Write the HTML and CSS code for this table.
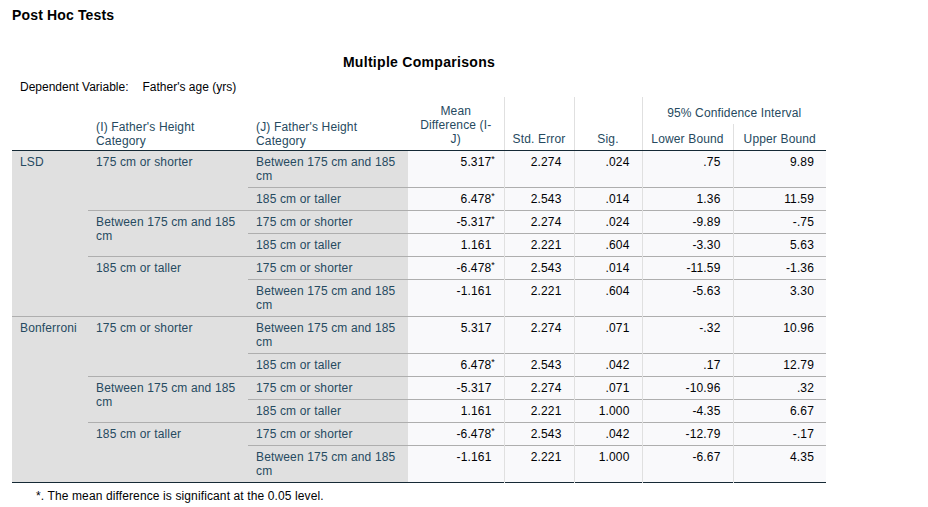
FILE: index.html
```html
<!DOCTYPE html>
<html lang="en">
<head>
<meta charset="utf-8">
<title>Post Hoc Tests</title>
<link rel="stylesheet" href="styles.css">
</head>
<body>
<h1 class="title">Post Hoc Tests</h1>
<section class="pivot">
  <h2 class="caption">Multiple Comparisons</h2>
  <div class="depvar"><span>Dependent Variable:</span><span>Father's age (yrs)</span></div>
  <table class="mc">
    <colgroup>
      <col class="c-method"><col class="c-i"><col class="c-j"><col class="c-md"><col class="c-se"><col class="c-sig"><col class="c-lb"><col class="c-ub">
    </colgroup>
    <thead>
      <tr>
        <th class="rh hb" rowspan="2"></th>
        <th class="rh hb" rowspan="2">(I) Father's Height Category</th>
        <th class="rh hb" rowspan="2">(J) Father's Height Category</th>
        <th class="ch hb md" rowspan="2">Mean Difference (I-J)</th>
        <th class="ch hb vl" rowspan="2">Std. Error</th>
        <th class="ch hb vl" rowspan="2">Sig.</th>
        <th class="ch vl ci" colspan="2">95% Confidence Interval</th>
      </tr>
      <tr>
        <th class="ch hb vl sub">Lower Bound</th>
        <th class="ch hb vl sub">Upper Bound</th>
      </tr>
    </thead>
    <tbody>
      <tr>
        <td class="m" rowspan="6">LSD</td>
        <td class="i" rowspan="2">175 cm or shorter</td>
        <td class="j">Between 175 cm and 185 cm</td>
        <td class="n">5.317<sup class="star">*</sup></td><td class="n vl">2.274</td><td class="n vl">.024</td><td class="n vl">.75</td><td class="n vl">9.89</td>
      </tr>
      <tr>
        <td class="j">185 cm or taller</td>
        <td class="n">6.478<sup class="star">*</sup></td><td class="n vl">2.543</td><td class="n vl">.014</td><td class="n vl">1.36</td><td class="n vl">11.59</td>
      </tr>
      <tr>
        <td class="i" rowspan="2">Between 175 cm and 185 cm</td>
        <td class="j">175 cm or shorter</td>
        <td class="n">-5.317<sup class="star">*</sup></td><td class="n vl">2.274</td><td class="n vl">.024</td><td class="n vl">-9.89</td><td class="n vl">-.75</td>
      </tr>
      <tr>
        <td class="j">185 cm or taller</td>
        <td class="n">1.161</td><td class="n vl">2.221</td><td class="n vl">.604</td><td class="n vl">-3.30</td><td class="n vl">5.63</td>
      </tr>
      <tr>
        <td class="i" rowspan="2">185 cm or taller</td>
        <td class="j">175 cm or shorter</td>
        <td class="n">-6.478<sup class="star">*</sup></td><td class="n vl">2.543</td><td class="n vl">.014</td><td class="n vl">-11.59</td><td class="n vl">-1.36</td>
      </tr>
      <tr>
        <td class="j">Between 175 cm and 185 cm</td>
        <td class="n">-1.161</td><td class="n vl">2.221</td><td class="n vl">.604</td><td class="n vl">-5.63</td><td class="n vl">3.30</td>
      </tr>
      <tr>
        <td class="m" rowspan="6">Bonferroni</td>
        <td class="i" rowspan="2">175 cm or shorter</td>
        <td class="j">Between 175 cm and 185 cm</td>
        <td class="n">5.317</td><td class="n vl">2.274</td><td class="n vl">.071</td><td class="n vl">-.32</td><td class="n vl">10.96</td>
      </tr>
      <tr>
        <td class="j">185 cm or taller</td>
        <td class="n">6.478<sup class="star">*</sup></td><td class="n vl">2.543</td><td class="n vl">.042</td><td class="n vl">.17</td><td class="n vl">12.79</td>
      </tr>
      <tr>
        <td class="i" rowspan="2">Between 175 cm and 185 cm</td>
        <td class="j">175 cm or shorter</td>
        <td class="n">-5.317</td><td class="n vl">2.274</td><td class="n vl">.071</td><td class="n vl">-10.96</td><td class="n vl">.32</td>
      </tr>
      <tr>
        <td class="j">185 cm or taller</td>
        <td class="n">1.161</td><td class="n vl">2.221</td><td class="n vl">1.000</td><td class="n vl">-4.35</td><td class="n vl">6.67</td>
      </tr>
      <tr>
        <td class="i" rowspan="2">185 cm or taller</td>
        <td class="j">175 cm or shorter</td>
        <td class="n">-6.478<sup class="star">*</sup></td><td class="n vl">2.543</td><td class="n vl">.042</td><td class="n vl">-12.79</td><td class="n vl">-.17</td>
      </tr>
      <tr>
        <td class="j">Between 175 cm and 185 cm</td>
        <td class="n">-1.161</td><td class="n vl">2.221</td><td class="n vl">1.000</td><td class="n vl">-6.67</td><td class="n vl">4.35</td>
      </tr>
    </tbody>
  </table>
  <p class="footnote">*. The mean difference is significant at the 0.05 level.</p>
</section>
</body>
</html>
```

FILE: styles.css
```css
body {
  margin: 0;
  background: #ffffff;
  color: #010205;
  font-family: "Liberation Sans", Arial, sans-serif;
  font-size: 12px;
}

.title {
  margin: 7px 0 0 12px;
  font-size: 14px;
  line-height: 17px;
  font-weight: bold;
  letter-spacing: 0.15px;
  color: #000000;
}

.pivot {
  margin-left: 12px;
  width: 814px;
}

.caption {
  margin: 30px 0 0;
  text-align: center;
  font-size: 14px;
  line-height: 17px;
  font-weight: bold;
  letter-spacing: 0.3px;
  color: #000000;
}

.depvar {
  display: flex;
  gap: 14px;
  margin-top: 9px;
  padding-left: 8px;
  line-height: 14px;
  color: #010205;
}

.mc {
  margin-top: 3px;
  width: 814px;
  table-layout: fixed;
  border-collapse: collapse;
  letter-spacing: 0.15px;
  border-bottom: 1px solid #152935;
}

.c-method { width: 76px; }
.c-i { width: 160px; }
.c-j { width: 160px; }
.c-md { width: 96px; }
.c-se { width: 70px; }
.c-sig { width: 68px; }
.c-lb { width: 91px; }
.c-ub { width: 93px; }

.mc th,
.mc td {
  line-height: 14px;
  font-weight: normal;
}

/* header */
.mc th {
  background: #ffffff;
  color: #264a60;
  vertical-align: bottom;
}

.mc th.rh {
  text-align: left;
  padding: 0 8px 2px;
}

.mc th.ch {
  text-align: center;
  padding: 0 4px 4px;
}

.mc th.md {
  padding-left: 10px;
  padding-right: 10px;
}

.mc th.ci {
  padding-top: 9px;
}

.mc th.sub {
  padding-top: 8px;
}

.mc th.vl {
  border-left: 1px solid #e0e0e0;
}

.mc th.hb {
  border-bottom: 1px solid #152935;
}

/* body */
.mc td {
  vertical-align: top;
  padding: 4px 8px 4px;
}

.mc tbody tr + tr td {
  border-top: 1px solid #aeaeae;
}

.mc td.m,
.mc td.i,
.mc td.j {
  background: #e0e0e0;
  color: #264a60;
  text-align: left;
}

.mc td.n {
  background: #f9f9fb;
  color: #010205;
  text-align: right;
  padding-right: 12px;
  padding-left: 4px;
}

.mc td.vl {
  border-left: 1px solid #e0e0e0;
}

.star {
  font-size: 9px;
  line-height: 0;
  vertical-align: 4px;
  margin-right: -3.5px;
}

.footnote {
  margin: 6px 0 0;
  padding-left: 24px;
  line-height: 14px;
  letter-spacing: 0.12px;
  color: #010205;
}
```
